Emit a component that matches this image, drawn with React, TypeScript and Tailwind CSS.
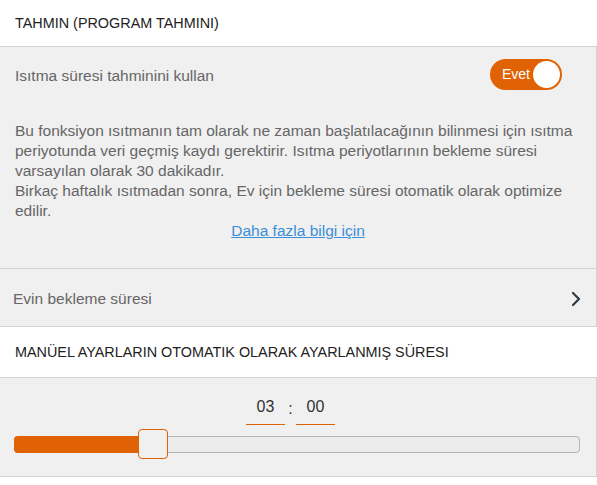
import { ChevronRight } from "lucide-react";

const font = { fontFamily: '"Liberation Sans", Arial, sans-serif' };

export default function App() {
  return (
    <main className="min-h-screen bg-white text-[#222]" style={font}>
      <SectionTitle height="h-[47px]">TAHMIN (PROGRAM TAHMINI)</SectionTitle>
      <EstimatePanel />
      <button className="flex h-[58px] w-full items-center justify-between border-b border-r border-[#d3d3d3] bg-[#f0f0f0] pl-[13px] pr-[8px] pt-[2px] text-left text-[15.5px] text-[#666]">
        Evin bekleme süresi
        <ChevronRight className="h-6 w-6 text-[#2f3a44]" strokeWidth={2.2} aria-hidden="true" />
      </button>
      <SectionTitle height="h-[51px]">MANÜEL AYARLARIN OTOMATIK OLARAK AYARLANMIŞ SÜRESI</SectionTitle>
      <DurationPanel />
    </main>
  );
}

function SectionTitle({ children, height }: { children: React.ReactNode; height: string }) {
  return (
    <h2 className={`flex items-center border-b border-[#d3d3d3] px-[15px] pt-[2px] text-[14.4px] text-[#222] ${height}`}>
      {children}
    </h2>
  );
}

function EstimatePanel() {
  return (
    <section className="border-b border-r border-[#d3d3d3] bg-[#f0f0f0] px-[15px] pb-[27px] pt-[12px]">
      <div className="flex h-[31px] items-center justify-between pr-[19px]">
        <span className="pt-[2px] text-[15.5px] text-[#666]">Isıtma süresi tahminini kullan</span>
        <span className="flex h-[31px] w-[72px] items-center justify-between rounded-full bg-[#e06205] pl-[12px] pr-[2px]">
          <span className="text-[14px] text-white">Evet</span>
          <span className="h-[27px] w-[27px] rounded-full bg-white" />
        </span>
      </div>
      <p className="mt-[31px] text-[15.5px] leading-[20px] text-[#666]">
        Bu fonksiyon ısıtmanın tam olarak ne zaman başlatılacağının bilinmesi için ısıtma periyotunda veri
        geçmiş kaydı gerektirir. Isıtma periyotlarının bekleme süresi varsayılan olarak 30 dakikadır.
        <br />
        Birkaç haftalık ısıtmadan sonra, Ev için bekleme süresi otomatik olarak optimize edilir.
      </p>
      <p className="text-center text-[15.5px] leading-[20px]">
        <a href="#" className="text-[#3b8fd9] underline">
          Daha fazla bilgi için
        </a>
      </p>
    </section>
  );
}

function DurationPanel() {
  const percent = 22;
  return (
    <section className="h-[99px] border-b border-r border-[#d3d3d3] bg-[#f0f0f0] px-[14px] pt-[18px]">
      <div className="flex items-start justify-center pr-[15px] text-[16px] text-[#333]">
        <span className="w-[39px] border-b border-[#e06205] pb-[6px] text-center leading-[22px]">03</span>
        <span className="w-[11px] text-center leading-[26px]">:</span>
        <span className="w-[39px] border-b border-[#e06205] pb-[6px] text-center leading-[22px]">00</span>
      </div>
      <div className="relative mt-[11px] h-[17px] w-[566px] rounded-[4px] border border-[#b4b4b4] bg-[#ececec]">
        <div
          className="absolute -left-px -top-px h-[17px] rounded-l-[4px] bg-[#e06205]"
          style={{ width: `${percent}%` }}
        />
        <div className="absolute left-[123px] top-[-8px] h-[30px] w-[30px] rounded-[4px] border border-[#e06205] bg-[#f0f0f0]" />
      </div>
    </section>
  );
}
